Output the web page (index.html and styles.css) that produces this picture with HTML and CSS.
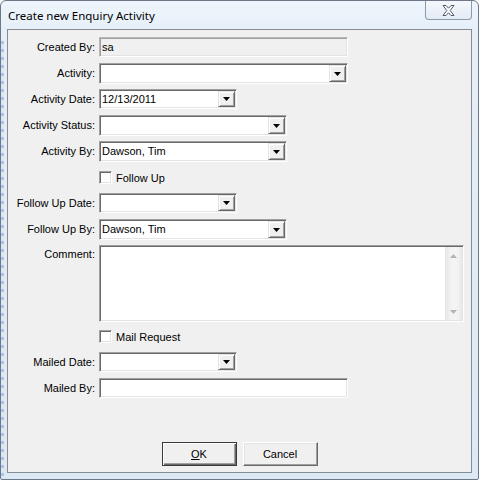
FILE: index.html
```html
<!DOCTYPE html>
<html lang="en">
<head>
<meta charset="utf-8">
<title>Create new Enquiry Activity</title>
<link rel="stylesheet" href="styles.css">
</head>
<body>
<div class="window">
  <div class="titlebar">
    <span class="title">Create new Enquiry Activity</span>
    <button class="close" type="button" aria-label="Close">
      <svg width="13" height="11" viewBox="0 0 13 11"><polygon points="1,0.5 4,0.5 6.5,3.2 9,0.5 12,0.5 8.2,5.5 12,10.5 9,10.5 6.5,7.8 4,10.5 1,10.5 4.8,5.5" fill="#fdfdfd" stroke="#505a66" stroke-width="1" stroke-linejoin="round"/></svg>
    </button>
  </div>
  <div class="client">
    <div class="form">
      <div class="row">
        <span class="lbl">Created By:</span>
        <div class="box readonly w-249 h-20"><span class="val">sa</span></div>
      </div>
      <div class="row">
        <span class="lbl">Activity:</span>
        <div class="box w-249 h-21"><span class="val"></span><span class="drop"><svg width="7" height="4" viewBox="0 0 7 4"><polygon points="0,0 7,0 3.5,4" fill="#000"/></svg></span></div>
      </div>
      <div class="row">
        <span class="lbl">Activity Date:</span>
        <div class="box w-138 h-20"><span class="val">12/13/2011</span><span class="drop"><svg width="7" height="4" viewBox="0 0 7 4"><polygon points="0,0 7,0 3.5,4" fill="#000"/></svg></span></div>
      </div>
      <div class="row">
        <span class="lbl">Activity Status:</span>
        <div class="box w-188 h-21"><span class="val"></span><span class="drop"><svg width="7" height="4" viewBox="0 0 7 4"><polygon points="0,0 7,0 3.5,4" fill="#000"/></svg></span></div>
      </div>
      <div class="row">
        <span class="lbl">Activity By:</span>
        <div class="box w-188 h-21"><span class="val">Dawson, Tim</span><span class="drop"><svg width="7" height="4" viewBox="0 0 7 4"><polygon points="0,0 7,0 3.5,4" fill="#000"/></svg></span></div>
      </div>
      <div class="row">
        <span class="lbl"></span>
        <div class="check"><span class="cb"></span><span>Follow Up</span></div>
      </div>
      <div class="row">
        <span class="lbl">Follow Up Date:</span>
        <div class="box w-138 h-20"><span class="val"></span><span class="drop"><svg width="7" height="4" viewBox="0 0 7 4"><polygon points="0,0 7,0 3.5,4" fill="#000"/></svg></span></div>
      </div>
      <div class="row">
        <span class="lbl">Follow Up By:</span>
        <div class="box w-188 h-21"><span class="val">Dawson, Tim</span><span class="drop"><svg width="7" height="4" viewBox="0 0 7 4"><polygon points="0,0 7,0 3.5,4" fill="#000"/></svg></span></div>
      </div>
      <div class="row row-comment">
        <span class="lbl lbl-top">Comment:</span>
        <div class="box w-365 h-77"><span class="val"></span>
          <span class="vscroll">
            <span class="arrow"><svg width="7" height="4" viewBox="0 0 7 4"><polygon points="0,4 7,4 3.5,0" fill="#b4b4b4"/></svg></span>
            <span class="arrow"><svg width="7" height="4" viewBox="0 0 7 4"><polygon points="0,0 7,0 3.5,4" fill="#b4b4b4"/></svg></span>
          </span>
        </div>
      </div>
      <div class="row">
        <span class="lbl"></span>
        <div class="check"><span class="cb"></span><span>Mail Request</span></div>
      </div>
      <div class="row">
        <span class="lbl">Mailed Date:</span>
        <div class="box w-138 h-20"><span class="val"></span><span class="drop"><svg width="7" height="4" viewBox="0 0 7 4"><polygon points="0,0 7,0 3.5,4" fill="#000"/></svg></span></div>
      </div>
      <div class="row">
        <span class="lbl">Mailed By:</span>
        <div class="box w-249 h-20"><span class="val"></span></div>
      </div>
    </div>
    <div class="footer">
      <button class="btn default" type="button"><u>O</u>K</button>
      <button class="btn" type="button">Cancel</button>
    </div>
  </div>
</div>
</body>
</html>
```
FILE: styles.css
```css
* { box-sizing: border-box; }
html, body { margin: 0; padding: 0; }
body {
  width: 479px;
  height: 480px;
  overflow: hidden;
  background: #ffffff;
  font-family: "Liberation Sans", Arial, sans-serif;
  font-size: 11px;
  color: #000;
}
.window {
  width: 479px;
  height: 480px;
  border: 1px solid #6c7885;
  border-radius: 6px 6px 2px 2px;
  padding: 0 6px 6px 6px;
  display: flex;
  flex-direction: column;
  background:
    repeating-linear-gradient(to bottom, #a9c4e4 0 3px, #dbe7f4 3px 8px) 0 40px / 3px calc(100% - 40px) no-repeat,
    linear-gradient(to bottom, #eef5fc 0, #e6eff8 30px, #dce8f4 100%);
}
.titlebar {
  height: 28px;
  display: flex;
  align-items: flex-start;
  flex: none;
}
.title {
  font-family: "Noto Sans", "Open Sans", sans-serif;
  font-size: 11.5px;
  line-height: 16px;
  padding: 7px 0 0 1px;
  color: #000;
}
.close {
  margin-left: auto;
  width: 47px;
  height: 19px;
  padding: 0;
  border: 1px solid #8d9aa9;
  border-top: none;
  border-radius: 0 0 4px 4px;
  background: linear-gradient(to bottom, #f4f8fc, #e3ebf4);
  display: flex;
  align-items: center;
  justify-content: center;
}
.close svg { display: block; margin-top: 0; }
.client {
  flex: 1;
  border: 1px solid #858c94;
  background: #f0f0f0;
  display: flex;
  flex-direction: column;
}
.form {
  display: flex;
  flex-direction: column;
  padding-top: 7px;
}
.row {
  display: grid;
  grid-template-columns: 87px max-content;
  column-gap: 4px;
  align-items: start;
  min-height: 21px;
  margin-bottom: 5px;
}
.row-comment { margin-bottom: 4px; }
.lbl {
  text-align: right;
  line-height: 20px;
  white-space: nowrap;
}
.lbl-top { line-height: 18px; }
.box {
  display: flex;
  align-items: stretch;
  padding: 1px;
  background: #fff;
  border: 1px solid;
  border-color: #a0a0a0 #ffffff #ffffff #a0a0a0;
  box-shadow: inset 1px 1px #696969, inset -1px -1px #e3e3e3;
}
.box.readonly {
  background: #f0f0f0;
  border-color: #b9b9b9 #ffffff #ffffff #b9b9b9;
  box-shadow: inset 1px 1px #a0a0a0, inset -1px -1px #e3e3e3;
}
.w-249 { width: 249px; }
.w-138 { width: 138px; }
.w-188 { width: 188px; }
.w-365 { width: 365px; }
.h-20 { height: 20px; }
.h-21 { height: 21px; }
.h-77 { height: 77px; }
.val {
  flex: 1;
  padding-left: 1px;
  line-height: 16px;
  white-space: nowrap;
  overflow: hidden;
}
.h-21 .val { line-height: 17px; }
.drop {
  width: 17px;
  flex: none;
  background: #f0f0f0;
  border: 1px solid;
  border-color: #e3e3e3 #696969 #696969 #e3e3e3;
  box-shadow: inset 1px 1px #ffffff, inset -1px -1px #a0a0a0;
  display: flex;
  align-items: center;
  justify-content: center;
}
.drop svg { display: block; }
.vscroll {
  width: 17px;
  flex: none;
  display: flex;
  flex-direction: column;
  justify-content: space-between;
  background: linear-gradient(to right, #e6e6e6 0, #f4f4f4 40%, #f4f4f4 70%, #e8e8e8 100%);
}
.arrow {
  height: 17px;
  display: flex;
  align-items: center;
  justify-content: center;
}
.arrow svg { display: block; }
.check {
  display: flex;
  align-items: center;
  height: 21px;
  gap: 4px;
}
.cb {
  width: 13px;
  height: 13px;
  background: #fff;
  border: 1px solid;
  border-color: #a0a0a0 #ffffff #ffffff #a0a0a0;
  box-shadow: inset 1px 1px #696969, inset -1px -1px #e3e3e3;
}
.footer {
  margin-top: auto;
  display: flex;
  justify-content: center;
  gap: 6px;
  padding-bottom: 6px;
}
.btn {
  width: 75px;
  height: 24px;
  padding: 0;
  font-family: "Liberation Sans", Arial, sans-serif;
  font-size: 11px;
  color: #000;
  background: #f0f0f0;
  border: 1px solid;
  border-color: #ffffff #696969 #696969 #ffffff;
  box-shadow: inset -1px -1px #a0a0a0, inset 1px 1px #e3e3e3;
}
.btn.default {
  border-color: #3a3a3a;
  box-shadow: inset 1px 1px #ffffff, inset -1px -1px #696969, inset -2px -2px #a0a0a0;
}
.btn u { text-decoration: underline; }
```
